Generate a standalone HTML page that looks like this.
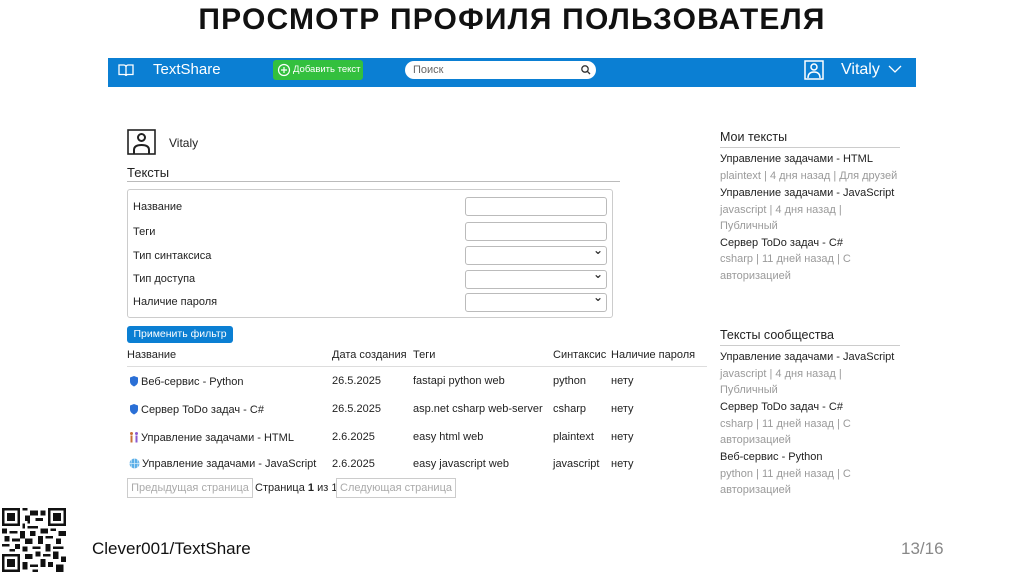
<!DOCTYPE html>
<html><head><meta charset="utf-8"><style>
*{margin:0;padding:0;box-sizing:border-box}
body{width:1024px;height:574px;background:#fff;position:relative;overflow:hidden;font-family:"Liberation Sans","DejaVu Sans",sans-serif;color:#222}
.a{position:absolute;white-space:nowrap}
.t{font-size:11px}
.g{color:#9a9a9a}
.inp{position:absolute;left:465px;width:142px;height:19px;border:1px solid #bbb;border-radius:3px;background:#fff}
.sel:after{content:"⌄";position:absolute;right:3px;top:-4px;font-size:12px;font-weight:bold;color:#333}
.hr{position:absolute;height:1px;background:#ccc}
.ic{display:inline-block;vertical-align:-2px;margin-right:2px}
</style></head><body>
<div class="a" style="left:0;width:1024px;top:3px;text-align:center;font-size:30px;font-weight:bold;letter-spacing:1.2px;color:#111">ПРОСМОТР ПРОФИЛЯ ПОЛЬЗОВАТЕЛЯ</div>

<div class="a" style="left:108px;top:58px;width:808px;height:29px;background:#0b7fd3"></div>
<svg class="a" style="left:118px;top:63px" width="16" height="14" viewBox="0 0 16 14"><path d="M1 2h5c1 0 2 1 2 2v9c0-1-1-1.5-2-1.5H1zM15 2h-5c-1 0-2 1-2 2v9c0-1 1-1.5 2-1.5h5z" fill="none" stroke="#fff" stroke-width="1.3"/></svg>
<div class="a" style="left:153px;top:61px;font-size:15px;color:#fff">TextShare</div>
<div class="a" style="left:273px;top:60px;width:90px;height:20px;background:#33c03e;border-radius:3px;color:#fff;font-size:9.5px;line-height:20px;padding-left:20px">Добавить текст</div>
<svg class="a" style="left:277px;top:63px" width="14" height="14"><circle cx="7" cy="7" r="5.5" fill="none" stroke="#fff" stroke-width="1.2"/><path d="M7 4v6M4 7h6" stroke="#fff" stroke-width="1.2"/></svg>
<div class="a" style="left:405px;top:61px;width:191px;height:18px;background:#fff;border-radius:9px;font-size:11px;color:#666;line-height:18px;padding-left:8px">Поиск</div>
<svg class="a" style="left:580px;top:64px" width="11" height="11"><circle cx="5" cy="5" r="3.2" fill="none" stroke="#333" stroke-width="1.3"/><path d="M7.5 7.5l2.5 2.5" stroke="#333" stroke-width="1.3"/></svg>
<svg class="a" style="left:804px;top:60px" width="20" height="20"><rect x="1" y="1" width="18" height="18" fill="none" stroke="#fff" stroke-width="1.5"/><circle cx="10" cy="7" r="3" fill="none" stroke="#fff" stroke-width="1.5"/><path d="M4 18c0-5 3-6 6-6s6 1 6 6" fill="none" stroke="#fff" stroke-width="1.5"/></svg>
<div class="a" style="left:841px;top:61px;font-size:16px;color:#fff">Vitaly</div>
<svg class="a" style="left:888px;top:65px" width="14" height="9"><path d="M1 1l6 6 6-6" fill="none" stroke="#fff" stroke-width="1.3"/></svg>

<svg class="a" style="left:127px;top:129px" width="29" height="26"><rect x="1" y="1" width="27" height="24" fill="none" stroke="#222" stroke-width="1.6"/><circle cx="14.5" cy="8.5" r="3.5" fill="none" stroke="#222" stroke-width="2"/><path d="M7 25v-4c0-4 4-5 7.5-5s7.5 1 7.5 5v4" fill="none" stroke="#222" stroke-width="2"/></svg>
<div class="a" style="left:169px;top:136px;font-size:12px">Vitaly</div>
<div class="a" style="left:127px;top:165px;font-size:13px">Тексты</div>
<div class="hr" style="left:127px;top:181px;width:493px;background:#bbb"></div>
<div class="a" style="left:127px;top:189px;width:486px;height:129px;border:1px solid #ccc;border-radius:3px"></div>
<div class="a t" style="left:133px;top:201px">Название</div>
<div class="a t" style="left:133px;top:226px">Теги</div>
<div class="a t" style="left:133px;top:250px">Тип синтаксиса</div>
<div class="a t" style="left:133px;top:273px">Тип доступа</div>
<div class="a t" style="left:133px;top:296px">Наличие пароля</div>
<div class="inp" style="top:197px"></div>
<div class="inp" style="top:222px"></div>
<div class="inp sel" style="top:246px"></div>
<div class="inp sel" style="top:270px"></div>
<div class="inp sel" style="top:293px"></div>
<div class="a" style="left:127px;top:326px;width:106px;height:17px;background:#0b7fd3;border-radius:3px;color:#fff;font-size:10.5px;line-height:17px;text-align:center">Применить фильтр</div>

<div class="a t" style="left:127px;top:349px">Название</div>
<div class="a t" style="left:332px;top:349px">Дата создания</div>
<div class="a t" style="left:413px;top:349px">Теги</div>
<div class="a t" style="left:553px;top:349px">Синтаксис</div>
<div class="a t" style="left:611px;top:349px">Наличие пароля</div>
<div class="hr" style="left:127px;top:366px;width:580px;background:#ddd"></div>
<div class="a t" style="left:129px;top:375px"><svg class="ic" width="10" height="12"><path d="M5 1l4 1.5v4c0 2.5-2 4-4 5-2-1-4-2.5-4-5v-4z" fill="#2a6fd6"/></svg>Веб-сервис - Python</div>
<div class="a t" style="left:129px;top:403px"><svg class="ic" width="10" height="12"><path d="M5 1l4 1.5v4c0 2.5-2 4-4 5-2-1-4-2.5-4-5v-4z" fill="#2a6fd6"/></svg>Сервер ToDo задач - C#</div>
<div class="a t" style="left:129px;top:431px"><svg class="ic" width="10" height="12"><circle cx="2.5" cy="2.5" r="1.5" fill="#c8703a"/><circle cx="7.5" cy="2.5" r="1.5" fill="#8a5ad0"/><rect x="1.5" y="4.5" width="2" height="7" fill="#c8703a"/><rect x="6.5" y="4.5" width="2" height="7" fill="#8a5ad0"/></svg>Управление задачами - HTML</div>
<div class="a t" style="left:129px;top:458px"><svg class="ic" width="11" height="11"><circle cx="5.5" cy="5.5" r="5" fill="#5aaee8"/><path d="M0.5 5.5h10M5.5 0.5v10M3 1.5c-1.5 3-1.5 5 0 8M8 1.5c1.5 3 1.5 5 0 8" stroke="#d8eefa" stroke-width="0.7" fill="none"/></svg>Управление задачами - JavaScript</div>
<div class="a t" style="left:332px;top:375px">26.5.2025</div>
<div class="a t" style="left:332px;top:403px">26.5.2025</div>
<div class="a t" style="left:332px;top:431px">2.6.2025</div>
<div class="a t" style="left:332px;top:458px">2.6.2025</div>
<div class="a t" style="left:413px;top:375px">fastapi python web</div>
<div class="a t" style="left:413px;top:403px">asp.net csharp web-server</div>
<div class="a t" style="left:413px;top:431px">easy html web</div>
<div class="a t" style="left:413px;top:458px">easy javascript web</div>
<div class="a t" style="left:553px;top:375px">python</div>
<div class="a t" style="left:553px;top:403px">csharp</div>
<div class="a t" style="left:553px;top:431px">plaintext</div>
<div class="a t" style="left:553px;top:458px">javascript</div>
<div class="a t" style="left:611px;top:375px">нету</div>
<div class="a t" style="left:611px;top:403px">нету</div>
<div class="a t" style="left:611px;top:431px">нету</div>
<div class="a t" style="left:611px;top:458px">нету</div>
<div class="a t" style="left:127px;top:478px;width:126px;height:20px;border:1px solid #ccc;color:#aaa;line-height:18px;text-align:center">Предыдущая страница</div>
<div class="a t" style="left:255px;top:482px">Страница <b>1</b> из 1</div>
<div class="a t" style="left:336px;top:478px;width:120px;height:20px;border:1px solid #ccc;color:#aaa;line-height:18px;text-align:center">Следующая страница</div>

<div class="a" style="left:720px;top:130px;font-size:12.5px">Мои тексты</div>
<div class="hr" style="left:720px;top:147px;width:180px"></div>
<div class="a t" style="left:720px;top:153px">Управление задачами - HTML</div>
<div class="a t g" style="left:720px;top:170px">plaintext | 4 дня назад | Для друзей</div>
<div class="a t" style="left:720px;top:187px">Управление задачами - JavaScript</div>
<div class="a t g" style="left:720px;top:204px">javascript | 4 дня назад |</div>
<div class="a t g" style="left:720px;top:220px">Публичный</div>
<div class="a t" style="left:720px;top:237px">Сервер ToDo задач - C#</div>
<div class="a t g" style="left:720px;top:253px">csharp | 11 дней назад | С</div>
<div class="a t g" style="left:720px;top:270px">авторизацией</div>

<div class="a" style="left:720px;top:328px;font-size:12.5px">Тексты сообщества</div>
<div class="hr" style="left:720px;top:345px;width:180px"></div>
<div class="a t" style="left:720px;top:351px">Управление задачами - JavaScript</div>
<div class="a t g" style="left:720px;top:368px">javascript | 4 дня назад |</div>
<div class="a t g" style="left:720px;top:384px">Публичный</div>
<div class="a t" style="left:720px;top:401px">Сервер ToDo задач - C#</div>
<div class="a t g" style="left:720px;top:418px">csharp | 11 дней назад | С</div>
<div class="a t g" style="left:720px;top:434px">авторизацией</div>
<div class="a t" style="left:720px;top:451px">Веб-сервис - Python</div>
<div class="a t g" style="left:720px;top:468px">python | 11 дней назад | С</div>
<div class="a t g" style="left:720px;top:484px">авторизацией</div>

<svg class="a" style="left:2px;top:508px" width="64" height="64" viewBox="0 0 25 25" shape-rendering="crispEdges">
<g fill="#111">
<path d="M0 0h7v7H0zM18 0h7v7h-7zM0 18h7v7H0z"/>
</g>
<g fill="#fff"><path d="M1 1h5v5H1zM19 1h5v5h-5zM1 19h5v5H1z"/></g>
<g fill="#111"><path d="M2 2h3v3H2zM20 2h3v3h-3zM2 20h3v3H2z"/>
<path d="M8 0h2v1H8zM11 1h3v2h-3zM9 3h2v2H9zM13 4h3v1h-3zM15 1h2v2h-2zM8 6h1v2H8zM10 7h4v1h-4zM0 8h2v2H0zM3 9h3v1H3zM7 9h2v3H7zM11 9h2v2h-2zM15 8h3v2h-3zM19 8h2v1h-2zM22 9h3v2h-3zM1 11h2v2H1zM4 12h3v1H4zM9 12h3v2H9zM14 11h2v3h-2zM17 11h3v1h-3zM21 12h2v2h-2zM0 14h3v1H0zM5 14h2v2H5zM8 15h2v2H8zM12 15h3v1h-3zM17 14h2v3h-2zM20 15h4v1h-4zM9 18h3v2H9zM13 17h2v2h-2zM16 18h3v1h-3zM20 17h2v3h-2zM23 19h2v2h-2zM8 21h2v3H8zM11 22h3v1h-3zM15 20h2v3h-2zM18 21h2v2h-2zM21 22h3v3h-3zM12 24h2v1h-2zM3 16h2v1H3zM10 4h1v2h-1z"/></g>
</svg>
<div class="a" style="left:92px;top:539px;font-size:17px;color:#111">Clever001/TextShare</div>
<div class="a" style="left:901px;top:539px;font-size:17px;color:#888">13/16</div>
</body></html>
